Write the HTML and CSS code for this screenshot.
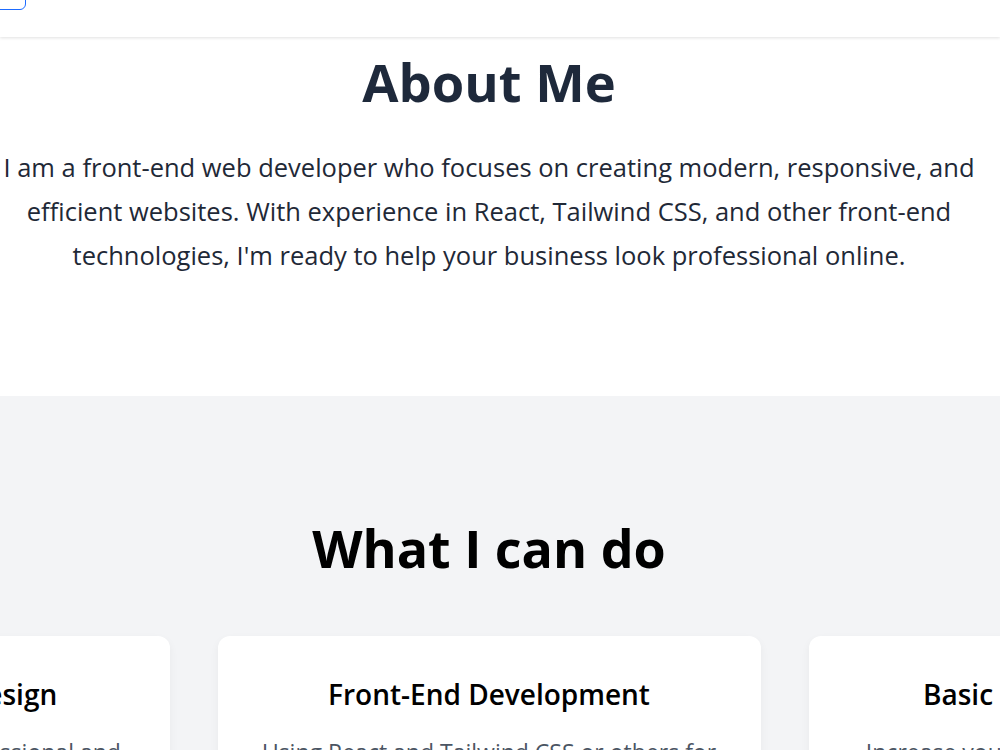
FILE: index.html
```html
<!DOCTYPE html>
<html lang="en">
<head>
<meta charset="utf-8">
<title>Portfolio</title>
<link rel="stylesheet" href="styles.css">
</head>
<body>
<header class="site-header">
  <a class="header-btn" href="#contact">Contact</a>
</header>
<main>
  <section class="about">
    <div class="inner">
      <h2 class="about-title">About Me</h2>
      <p class="about-text">I am a front-end web developer who focuses on creating modern, responsive, and efficient websites. With experience in React, Tailwind CSS, and other front-end technologies, I'm ready to help your business look professional online.</p>
    </div>
  </section>
  <section class="services">
    <div class="inner">
      <h2 class="services-title">What I can do</h2>
      <div class="cards">
        <div class="card">
          <h3 class="card-title">Responsive Web Design</h3>
          <p class="card-text">Create websites that are professional and look great on every device.</p>
        </div>
        <div class="card">
          <h3 class="card-title">Front-End Development</h3>
          <p class="card-text">Using React and Tailwind CSS or others for fast and interactive user interfaces.</p>
        </div>
        <div class="card">
          <h3 class="card-title">Basic SEO Optimization</h3>
          <p class="card-text">Increase your website visibility in search engines results.</p>
        </div>
      </div>
    </div>
  </section>
</main>
</body>
</html>
```

FILE: styles.css
```css
* { box-sizing: border-box; }
html, body { margin: 0; padding: 0; }
body {
  font-family: "Open Sans", "Noto Sans", sans-serif;
  background: #ffffff;
  color: #1f2937;
  overflow: hidden;
}
.site-header {
  height: 37px;
  background: #ffffff;
  box-shadow: 0 1px 3px rgba(0, 0, 0, 0.12);
  display: flex;
  align-items: flex-start;
  overflow: hidden;
  position: relative;
  z-index: 2;
}
.header-btn {
  display: block;
  margin-top: -32px;
  margin-left: -70px;
  width: 96px;
  height: 42px;
  border: 1.5px solid #1d6bff;
  border-radius: 6px;
  color: #1d6bff;
  text-decoration: none;
}
.inner {
  width: 978px;
  text-align: center;
}
.about {
  padding: 19px 0 119px;
}
.about-title {
  margin: 0;
  font-size: 52.5px;
  line-height: 52px;
  font-weight: 700;
  color: #1e293b;
}
.about-text {
  margin: 37px auto 0;
  max-width: 990px;
  font-size: 25.5px;
  line-height: 44px;
  color: #1f2937;
}
.services {
  background: #f3f4f6;
  padding: 126px 0 80px;
}
.services-title {
  margin: 0;
  font-size: 52px;
  line-height: 52px;
  font-weight: 700;
  color: #000000;
}
.cards {
  margin-top: 62px;
  display: flex;
  justify-content: center;
  gap: 48px;
}
.card {
  flex: 0 0 543px;
  background: #ffffff;
  border-radius: 12px;
  box-shadow: 0 4px 10px rgba(0, 0, 0, 0.05);
  padding: 38px 36px 40px;
}
.card-title {
  margin: 0;
  font-size: 28px;
  line-height: 40px;
  font-weight: 600;
  color: #000000;
}
.card-text {
  margin: 20px 0 0;
  font-size: 23px;
  line-height: 36px;
  color: #4b5563;
}
```
